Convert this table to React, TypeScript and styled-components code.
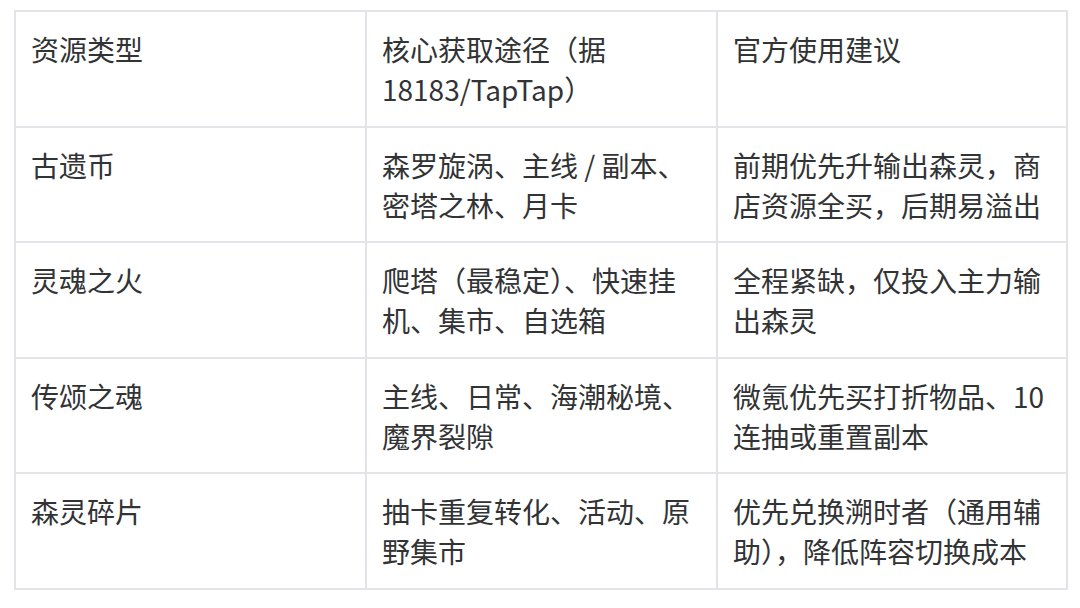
import styled, { createGlobalStyle } from 'styled-components';

const GlobalStyle = createGlobalStyle`
  html, body {
    margin: 0;
    padding: 0;
    background: #ffffff;
  }

  body {
    font-family: "Noto Sans CJK SC", "Noto Sans", sans-serif;
    color: #333333;
  }
`;

const Page = styled.main`
  width: 1080px;
  height: 608px;
  padding: 10px 0 0 14px;
  box-sizing: border-box;
  overflow: hidden;
`;

const Table = styled.div`
  display: grid;
  grid-template-columns: 351px 351px 350px;
  width: max-content;
  border-top: 2px solid #e3e4e8;
  border-left: 2px solid #e3e4e8;
`;

const Cell = styled.div`
  box-sizing: border-box;
  height: 115.6px;
  padding: 17px 15px 0 15px;
  border-right: 2px solid #e3e4e8;
  border-bottom: 2px solid #e3e4e8;
  font-size: 28px;
  line-height: 40px;
  color: #323335;
  word-break: break-all;
`;

const NoWrap = styled.span`
  white-space: nowrap;
`;

const rows: React.ReactNode[][] = [
  [
    '资源类型',
    <>
      核心获取途径（据 <NoWrap>18183/TapTap）</NoWrap>
    </>,
    '官方使用建议',
  ],
  ['古遗币', '森罗旋涡、主线 / 副本、密塔之林、月卡', '前期优先升输出森灵，商店资源全买，后期易溢出'],
  ['灵魂之火', '爬塔（最稳定）、快速挂机、集市、自选箱', '全程紧缺，仅投入主力输出森灵'],
  ['传颂之魂', '主线、日常、海潮秘境、魔界裂隙', '微氪优先买打折物品、10 连抽或重置副本'],
  ['森灵碎片', '抽卡重复转化、活动、原野集市', '优先兑换溯时者（通用辅助），降低阵容切换成本'],
];

export default function App(): JSX.Element {
  return (
    <>
      <GlobalStyle />
      <Page>
        <Table>
          {rows.map((row, r) =>
            row.map((content, c) => <Cell key={`${r}-${c}`}>{content}</Cell>)
          )}
        </Table>
      </Page>
    </>
  );
}
